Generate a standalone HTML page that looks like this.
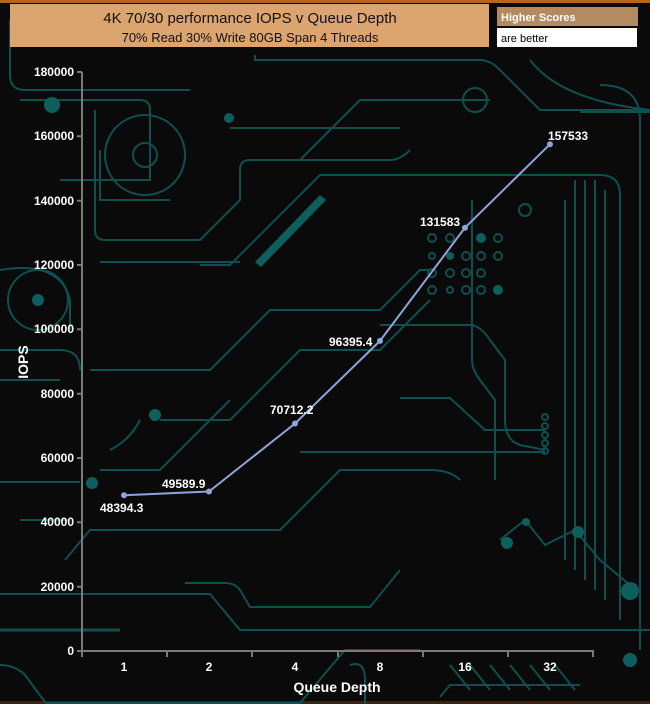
<!DOCTYPE html>
<html><head><meta charset="utf-8"><style>
html,body{margin:0;padding:0;background:#0b0b0b;}
svg{display:block}
</style></head><body>
<svg width="650" height="704" viewBox="0 0 650 704" xmlns="http://www.w3.org/2000/svg" font-family="Liberation Sans, Arial, sans-serif">
<rect width="650" height="704" fill="#0a0a0a"/>
<rect x="0" y="0" width="650" height="3" fill="#b5651d"/>
<rect x="0" y="701" width="650" height="3" fill="#3a2410"/>
<g fill="none" stroke="#0f4f50" stroke-width="2">
<path d="M10 20 V75 Q10 90 25 90 H190"/>
<path d="M255 55 V60 H480 Q490 60 500 70 L540 110 H650"/>
<path d="M530 60 Q560 100 650 110"/>
<path d="M580 112 H650"/>
<path d="M20 100 H140 Q150 100 150 110 V180 H60"/>
<path d="M95 110 V230 Q95 240 105 240 H200 L240 200 V170 Q240 160 250 160 H390 Q400 160 410 150"/>
<path d="M100 150 V200 H170"/>
<path d="M230 128 H400"/>
<path d="M300 160 L360 100 H490"/>
<path d="M200 265 H230 L320 175 H600 Q620 175 620 195 V620"/>
<path d="M100 262 H240"/>
<path d="M0 270 Q60 260 70 300 V330"/>
<path d="M0 350 H60 Q80 350 80 370"/>
<path d="M90 370 H210 L270 310 H380 L420 270 H430"/>
<path d="M0 380 H60"/>
<path d="M160 420 H230 L300 350 H380 L430 300"/>
<path d="M380 325 H470 Q480 325 490 340 L505 360 V420 Q505 440 520 445 L545 450"/>
<path d="M400 398 H450 L485 430 H545"/>
<path d="M300 452 H545"/>
<path d="M100 470 H160 L230 400"/>
<path d="M0 482 H80"/>
<path d="M65 560 L90 530 H280 L340 470 H430 Q450 470 460 480"/>
<path d="M20 520 H70"/>
<path d="M0 594 H210 L240 630 H650"/>
<path d="M185 583 H225 Q235 583 240 590 L250 607 H370 L400 570"/>
<path d="M0 665 Q15 665 25 675 L45 702"/>
<path d="M45 703 H300 L345 650 H420"/>
<path d="M350 665 Q365 660 365 680 V704"/>
<path d="M440 697 L450 685 H580"/>
<path d="M445 710 H590" stroke-dasharray="14 8"/>
<path d="M450 665 L470 690 M470 665 L490 690 M490 665 L510 690 M510 665 L530 690 M530 665 L550 690 M555 665 L575 690"/>
<path d="M500 540 L525 520 L545 545 L575 530 L600 560 L630 585"/>
<path d="M565 200 V560 M575 180 V570 M585 180 V580 M595 180 V590 M605 190 V600"/>
<path d="M472 200 V360 Q472 370 480 380 L495 400 V480"/>
<path d="M0 630 H120" stroke-width="3"/>
<path d="M110 450 Q130 440 140 420"/>
<path d="M600 85 Q640 85 640 120 V650"/>
</g>
<g fill="#0e5e5e">
<circle cx="38" cy="300" r="6"/><circle cx="92" cy="483" r="6"/><circle cx="630" cy="591" r="9"/><circle cx="630" cy="660" r="7"/>
<circle cx="507" cy="543" r="6"/><circle cx="578" cy="532" r="6"/><circle cx="526" cy="522" r="4"/>
<circle cx="481" cy="238" r="5"/><circle cx="498" cy="290" r="5"/><circle cx="450" cy="256" r="4"/>
<circle cx="229" cy="118" r="5"/><circle cx="52" cy="105" r="8"/><circle cx="155" cy="415" r="6"/>
<path d="M255 262 L320 195 L326 200 L261 267Z"/>
</g>
<g fill="none" stroke="#0f4f50" stroke-width="2">
<circle cx="38" cy="300" r="30"/><circle cx="145" cy="155" r="12"/><circle cx="145" cy="155" r="40"/>
<circle cx="475" cy="100" r="12"/><circle cx="525" cy="210" r="6"/>
<circle cx="545" cy="417" r="3"/><circle cx="545" cy="426" r="3"/><circle cx="545" cy="435" r="3"/><circle cx="545" cy="443" r="3"/><circle cx="545" cy="451" r="3"/>
<circle cx="432" cy="238" r="4"/><circle cx="450" cy="238" r="4"/><circle cx="432" cy="256" r="3"/><circle cx="466" cy="256" r="4"/><circle cx="432" cy="273" r="4"/><circle cx="450" cy="273" r="4"/><circle cx="466" cy="273" r="4"/><circle cx="481" cy="273" r="4"/><circle cx="432" cy="290" r="4"/><circle cx="450" cy="290" r="3"/><circle cx="466" cy="290" r="4"/><circle cx="481" cy="290" r="4"/><circle cx="498" cy="256" r="4"/><circle cx="481" cy="256" r="4"/><circle cx="498" cy="238" r="4"/>
</g>
<!-- axes -->
<g stroke="#7a7a7a" stroke-width="2" fill="none">
<path d="M82 72 V651 H594"/>
<path d="M77 72 H82 M77 136.3 H82 M77 200.7 H82 M77 265 H82 M77 329.3 H82 M77 393.7 H82 M77 458 H82 M77 522.3 H82 M77 586.7 H82 M77 651 H82"/>
<path d="M82 651 V657 M167 651 V657 M252 651 V657 M338 651 V657 M423 651 V657 M508 651 V657 M593 651 V657"/>
</g>
<g fill="#ffffff" font-size="12" font-weight="bold" text-anchor="end">
<text x="74" y="76">180000</text><text x="74" y="140">160000</text><text x="74" y="205">140000</text><text x="74" y="269">120000</text><text x="74" y="333">100000</text><text x="74" y="398">80000</text><text x="74" y="462">60000</text><text x="74" y="526">40000</text><text x="74" y="591">20000</text><text x="74" y="655">0</text>
</g>
<g fill="#ffffff" font-size="12" font-weight="bold" text-anchor="middle">
<text x="124" y="671">1</text><text x="209" y="671">2</text><text x="295" y="671">4</text><text x="380" y="671">8</text><text x="465" y="671">16</text><text x="550" y="671">32</text>
<text x="337" y="692" font-size="14">Queue Depth</text>
<text x="0" y="0" font-size="14" transform="translate(28 362) rotate(-90)">IOPS</text>
</g>
<polyline points="124,495.3 209,491.5 295,423.5 380,340.9 465,227.7 550,144.2" fill="none" stroke="#8fa3dc" stroke-width="2"/>
<g fill="#8fa3dc">
<circle cx="124" cy="495.3" r="3"/><circle cx="209" cy="491.5" r="3"/><circle cx="295" cy="423.5" r="3"/><circle cx="380" cy="340.9" r="3"/><circle cx="465" cy="227.7" r="3"/><circle cx="550" cy="144.2" r="3"/>
</g>
<g fill="#ffffff" font-size="12" font-weight="bold">
<text x="100" y="512">48394.3</text>
<text x="162" y="488">49589.9</text>
<text x="270" y="414">70712.2</text>
<text x="329" y="346">96395.4</text>
<text x="420" y="226">131583</text>
<text x="548" y="140">157533</text>
</g>
<!-- title -->
<rect x="10" y="4" width="479" height="43" fill="#dca46e"/>
<text x="250" y="23" text-anchor="middle" font-size="15" fill="#111">4K 70/30 performance IOPS v Queue Depth</text>
<text x="250" y="42" text-anchor="middle" font-size="13" fill="#111">70% Read 30% Write 80GB Span 4 Threads</text>
<rect x="497" y="7" width="141" height="19" fill="#b48a62"/>
<text x="501" y="21" font-size="11" font-weight="bold" fill="#fff">Higher Scores</text>
<rect x="497" y="28" width="140" height="19" fill="#fff"/>
<text x="501" y="42" font-size="11" fill="#000">are better</text>
</svg>
</body></html>
